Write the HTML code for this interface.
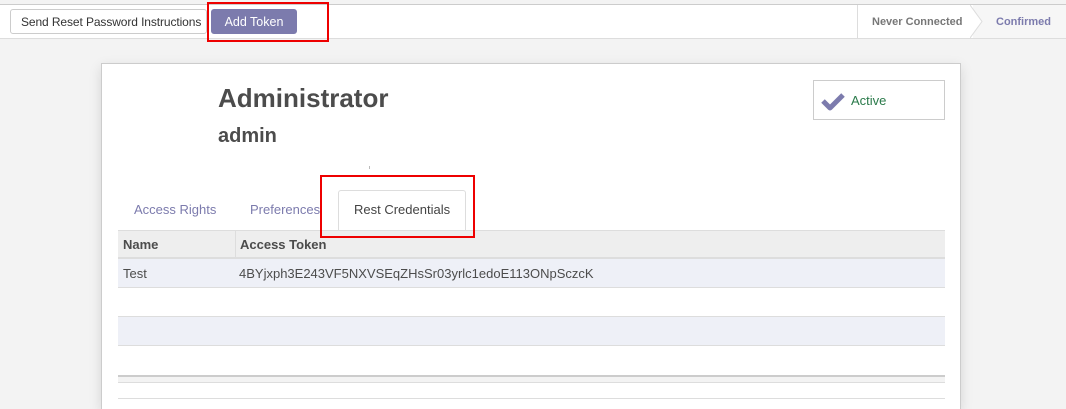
<!DOCTYPE html>
<html><head><style>
*{box-sizing:border-box;margin:0;padding:0;white-space:nowrap}
html,body{width:1066px;height:409px;overflow:hidden}
body{font-family:"Liberation Sans",sans-serif;font-size:13px;color:#4c4c4c;background:#f3f3f3;position:relative}
.abs{position:absolute}
.top{left:0;top:4px;width:1066px;height:35px;background:#fff;border-top:1px solid #ccc;border-bottom:1px solid #ddd}
.btn{position:absolute;height:25px;line-height:24px;border-radius:3px;font-size:12.5px;padding:0 10px}
.sheet{left:101px;top:63px;width:860px;height:346px;background:#fff;border:1px solid #ccc;border-bottom:none;box-shadow:0 4px 12px rgba(0,0,0,.12)}
.red{border:2px solid #e00;position:absolute}
</style></head><body>
<div class="abs top">
 <div class="btn" style="left:10px;top:4px;width:197px;border:1px solid #ccc;color:#333;background:#fff;font-size:12px;letter-spacing:-0.1px">Send Reset Password Instructions</div>
 <div class="btn" style="left:211px;top:4px;width:86px;background:#7c7bad;color:#fff;border:1px solid #7c7bad;text-align:center">Add Token</div>
 <div class="abs" style="left:857px;top:0;height:33px;border-left:1px solid #ddd"></div>
 <div class="abs" style="left:872px;top:11px;font-size:11px;font-weight:bold;color:#777">Never Connected</div>
 <div class="abs" style="left:973px;top:0;width:93px;height:33px;background:#f6f6f6"></div>
 <svg class="abs" style="left:970px;top:0" width="16" height="33"><path d="M0 0 L12 16.5 L0 33 Z" fill="#fff"/><path d="M0 0 L12 16.5 L0 33" fill="none" stroke="#ddd"/></svg>
 <div class="abs" style="left:996px;top:11px;font-size:11px;font-weight:bold;color:#7c7bad">Confirmed</div>
</div>
<div class="red" style="left:207px;top:2px;width:122px;height:40px"></div>
<div class="abs sheet">
 <div class="abs" style="left:116px;top:19px;font-size:26px;font-weight:bold;color:#4c4c4c">Administrator</div>
 <div class="abs" style="left:116px;top:61px;font-size:20px;font-weight:bold;color:#4c4c4c">admin</div>
 <div class="abs" style="left:711px;top:16px;width:132px;height:40px;border:1px solid #ccc">
  <svg class="abs" style="left:7px;top:10px" width="24" height="20"><path d="M2 10 L9 17 L22 4" fill="none" stroke="#7c7bad" stroke-width="5" stroke-linejoin="round"/></svg>
  <div class="abs" style="left:37px;top:12px;color:#2a7a4a;font-size:13px">Active</div>
 </div>
 <div class="abs" style="left:32px;top:138px;color:#7c7bad">Access Rights</div>
 <div class="abs" style="left:148px;top:138px;color:#7c7bad">Preferences</div>
 <div class="abs" style="left:236px;top:126px;width:128px;height:42px;border:1px solid #ddd;border-bottom:none;border-radius:3px 3px 0 0;background:#fff"></div>
 <div class="abs" style="left:252px;top:138px;color:#444">Rest Credentials</div>
 <div class="abs" style="left:16px;top:166px;width:827px">
  <div style="height:29px;background:#eee;border-top:1px solid #ddd;border-bottom:2px solid #ddd;font-weight:bold;position:relative">
   <span class="abs" style="left:5px;top:6px">Name</span>
   <div class="abs" style="left:117px;top:0;height:27px;border-left:1px solid #ddd"></div>
   <span class="abs" style="left:122px;top:6px">Access Token</span>
  </div>
  <div style="height:29px;background:#eef0f7;border-bottom:1px solid #ddd;position:relative">
   <span class="abs" style="left:5px;top:7px">Test</span>
   <span class="abs" style="left:121px;top:7px">4BYjxph3E243VF5NXVSEqZHsSr03yrlc1edoE113ONpSczcK</span>
  </div>
  <div style="height:29px;background:#fff;border-bottom:1px solid #ddd"></div>
  <div style="height:29px;background:#eef0f7;border-bottom:1px solid #ddd"></div>
  <div style="height:29px;background:#fff"></div>
  <div style="height:8px;border-top:2px solid #ccc;border-bottom:1px solid #ddd;background:#f3f3f3"></div>
  <div style="height:16px;border-bottom:1px solid #ddd"></div>
 </div>
</div>
<div class="abs" style="left:369px;top:166px;width:1px;height:3px;background:#bbb"></div>
<div class="red" style="left:320px;top:175px;width:155px;height:63px"></div>
</body></html>
